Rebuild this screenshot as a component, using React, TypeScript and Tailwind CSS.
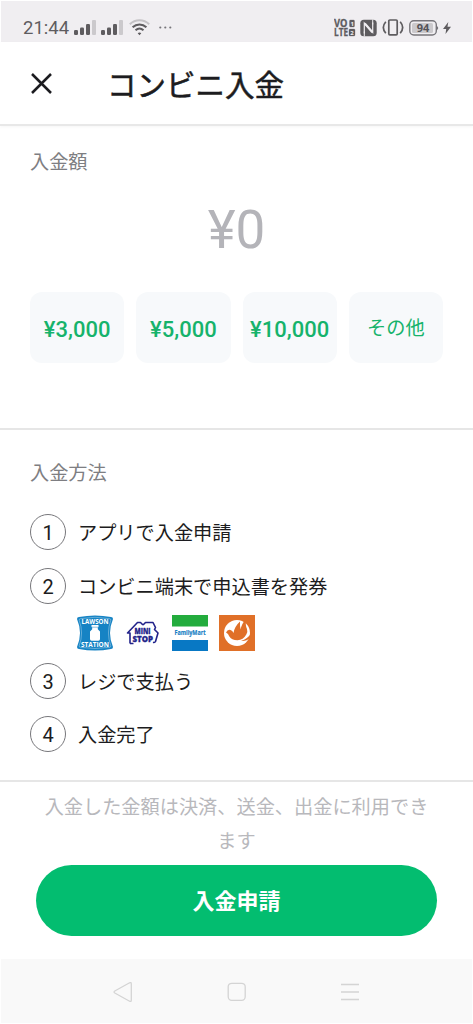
import { ReactNode, useState } from 'react'

const amounts = ['¥3,000', '¥5,000', '¥10,000', 'その他']

const SignalIcon = () => (
  <svg width="22" height="16" viewBox="0 0 22 16" fill="#5e5c5f">
    <rect x="0" y="10" width="4" height="5" rx="1.2" />
    <rect x="6" y="7.6" width="4" height="7.4" rx="1.2" />
    <rect x="12" y="4" width="4" height="11" rx="1.2" />
    <rect x="18" y="0" width="4" height="15" rx="1" fill="#cbc9cc" />
  </svg>
)

const WifiIcon = () => (
  <svg width="21" height="17" viewBox="0 0 21 17" fill="none" strokeWidth="2">
    <path d="M.8 5.2C6.3-.1 14.7-.1 20.2 5.2" stroke="#c4c2c5" />
    <path d="M3.6 8.3c4-3.9 9.800-3.9 13.8 0" stroke="#5e5c5f" />
    <path d="M6.500 11.300c2.400-2.200 5.600-2.200 8 0" stroke="#5e5c5f" />
    <path d="m8.700 14.200 1.800 2 1.800-2c-1.100-.9-2.500-.9-3.600 0Z" fill="#5e5c5f" />
  </svg>
)

const VolteIcon = () => (
  <svg width="22" height="20" viewBox="0 0 22 20" fill="#5e5c5f" stroke="#5e5c5f" strokeWidth=".3">
    <g fontFamily="Open Sans, sans-serif" fontSize="10" fontWeight="700">
      <text x="0" y="9" textLength="13.500" lengthAdjust="spacingAndGlyphs">VO</text>
      <text x="0" y="18" textLength="14" lengthAdjust="spacingAndGlyphs">LTE</text>
    </g>
    <rect x="15.500" y="2" width="5" height="7" rx="1" />
    <rect x="15" y="11" width="6" height="7" rx="1" />
    <g fill="#f0eef1" stroke="none" fontFamily="Open Sans, sans-serif" fontSize="6" fontWeight="700">
      <text x="16.400" y="7.700">1</text>
      <text x="16.300" y="16.800">2</text>
    </g>
  </svg>
)

const NfcIcon = () => (
  <svg width="17" height="18" viewBox="0 0 17 18">
    <rect x=".3" y=".8" width="16.400" height="16.400" rx="3.500" fill="#5e5c5f" />
    <path d="M4.300 14.500V4l8.400 9.500V3.500" fill="none" stroke="#f0eef1" strokeWidth="1.200" />
    <path d="m4.800 4.600 7.600 8.600" stroke="#f0eef1" strokeWidth="2.200" />
    <path d="M4.300 17.500v-5M12.700 5.500V.5" stroke="#f0eef1" strokeWidth="1" />
  </svg>
)

const VibrateIcon = () => (
  <svg width="22" height="17" viewBox="0 0 22 17" fill="none" stroke="#5e5c5f" strokeWidth="1.700">
    <rect x="6.800" y="1" width="8.400" height="14.800" rx="1" />
    <path d="M3.800 2.800c-3.200 3.700-3.200 7.700 0 11.400M18.200 2.800c3.200 3.700 3.200 7.700 0 11.400" />
  </svg>
)

const BatteryIcon = () => (
  <svg width="30" height="16" viewBox="0 0 30 16">
    <rect x=".8" y=".8" width="26.500" height="14.200" rx="4" fill="none" stroke="#77757a" strokeWidth="1.400" />
    <rect x="3" y="3" width="21" height="10" rx="1.500" fill="#cbc9cc" />
    <path d="M28 6.200c1.500.3 1.500 3.300 0 3.600Z" fill="#77757a" />
    <text x="14" y="11.900" textAnchor="middle" fontFamily="Open Sans, sans-serif" fontSize="11" fontWeight="700" fill="#555357">94</text>
  </svg>
)

const StatusBar = () => (
  <div className="mx-px mt-px flex h-[41px] shrink-0 items-center bg-[#f0eef1] pt-3 pl-[22px] text-[#5e5c5f]">
    <span className="w-[51px] pt-px font-[Roboto] text-[18.500px] leading-none">21:44</span>
    <SignalIcon />
    <span className="ml-[5px] flex"><SignalIcon /></span>
    <span className="ml-[6px] flex"><WifiIcon /></span>
    <svg className="ml-[9px]" width="14" height="4" viewBox="0 0 14 4" fill="#77757a">
      <circle cx="1.300" cy="1.500" r="1.100" />
      <circle cx="6.300" cy="1.500" r="1.100" />
      <circle cx="11.300" cy="1.500" r="1.100" />
    </svg>
    <div className="mr-[21px] ml-auto flex items-center">
      <VolteIcon />
      <span className="ml-[4px]"><NfcIcon /></span>
      <span className="ml-[5px]"><VibrateIcon /></span>
      <span className="ml-[5px]"><BatteryIcon /></span>
      <svg className="ml-1" width="8" height="12" viewBox="0 0 8 12" fill="#5e5c5f">
        <path d="M5.300 0 0 7h3.200L2.500 12 8 4.800H4.500Z" />
      </svg>
    </div>
  </div>
)

const LawsonLogo = () => (
  <svg width="36" height="36" viewBox="0 0 36 36">
    <path d="M2 2Q18-1 34 2q2 0 2 2-6 14 0 28 0 2-2 2-16 3-32 0-2 0-2-2 6-14 0-28 0-2 2-2Z" fill="#1683c4" />
    <path d="M3.500 3.700Q18 .8 32.500 3.700q1.500 0 1.300 1.400-4.700 13 0 25.700.2 1.400-1.300 1.500-14.500 2.500-29 0-1.500-.1-1.300-1.500 4.700-12.700 0-25.700-.2-1.400 1.300-1.400Z" fill="none" stroke="#d9edf8" strokeWidth=".4" />
    <path d="M14.500 10h7v2l-.7.600v1.600l2.200 2.400v7.500q0 1.600-1.600 1.600h-6.800q-1.600 0-1.600-1.600v-7.500l2.200-2.400v-1.600l-.7-.6Z" fill="#fff" />
    <path d="M14.500 12.200h7" stroke="#1683c4" strokeWidth=".5" />
    <g fill="#fff" fontFamily="Open Sans, sans-serif" fontSize="7" fontWeight="700" textAnchor="middle">
      <text x="18" y="8.500" textLength="27" lengthAdjust="spacingAndGlyphs">LAWSON</text>
      <text x="18" y="32.200" textLength="28" lengthAdjust="spacingAndGlyphs">STATION</text>
    </g>
  </svg>
)

const MiniStopLogo = () => (
  <svg width="34" height="24" viewBox="0 0 34 24" fill="none" stroke="#22238a" strokeWidth="1.600" strokeLinejoin="round">
    <path d="M4 22.500V12H1.500L11.500 1.500h3L17 4M17 4l2.500-2.500h7.500l2.500 5-1 2 3.500 3.500-2.500 8.500q-.6 1.300-2.500.8M4 22.500h3.500" />
    <g fill="#22238a" stroke="#22238a" strokeWidth=".3" fontFamily="Open Sans, sans-serif" fontSize="9" fontWeight="800">
      <text x="8.500" y="12.600" textLength="16" lengthAdjust="spacingAndGlyphs">MINI</text>
      <text x="6.500" y="21" textLength="20.500" lengthAdjust="spacingAndGlyphs">STOP</text>
    </g>
  </svg>
)

const FamilyMartLogo = () => (
  <svg width="36" height="36" viewBox="0 0 36 36">
    <path d="M0 0h36v36H0Z" fill="#fff" />
    <path d="M0 0h36v11.500H0Z" fill="#23ac3d" />
    <path d="M0 25h36v11H0Z" fill="#0878c4" />
    <text x="18" y="20.200" textAnchor="middle" textLength="31" lengthAdjust="spacingAndGlyphs" fontFamily="Open Sans, sans-serif" fontSize="6.500" fontWeight="700" fill="#1680c4" stroke="#1680c4" strokeWidth=".15">FamilyMart</text>
  </svg>
)

const SeicomartLogo = () => (
  <svg width="36" height="36" viewBox="0 0 36 36">
    <path d="M0 0h36v36H0Z" fill="#e07028" />
    <circle cx="18" cy="18" r="13" fill="#fff" />
    <path d="M7 17.500q1.500-3.300 4.500-2.500 2 .6 3 3 1-6.500 6.500-11.500-.3 4.500.7 8 .8-6 5.300-10-.8 6 1 9.500 1 3-.7 5.500-3 5.500-8.800 5.700-6 0-8.300-4-.8-2.500-3.200-3.700Z" fill="#e07028" />
    <path d="M32 18.500q-3.500 5.500-10 7.500 5.500.5 9-3Z" fill="#e07028" />
  </svg>
)

interface StepProps {
  num: number
  text: string
  children?: ReactNode
}

const Step = ({ num, text, children }: StepProps) => (
  <li>
    <div className="flex h-9 items-center">
      <span className="flex size-9 items-center justify-center rounded-full border-[1.500px] border-[#77777b] pt-0.5 font-[Roboto] text-[20px] leading-none">
        {num}
      </span>
      <span className="ml-3 pt-[3px] text-[19.200px] leading-none">{text}</span>
    </div>
    {children}
  </li>
)

const NavBar = () => (
  <nav className="mx-px mb-px flex h-16 shrink-0 items-center bg-[#f9f9f9] pt-0.5 pl-[111px]">
    <svg width="250" height="22" viewBox="0 0 250 22" fill="none" stroke="#d4d4d4" strokeWidth="1.300">
      <path d="M17.600 1.800 2.800 10q-1.500 1 0 2l14.800 8.200q1.700.8 1.700-1V2.800q0-1.800-1.700-1Z" />
      <rect x="116.200" y="2.300" width="17" height="17" rx="3.500" />
      <path d="M229 3.500h18M229 11h18M229 18.500h18" />
    </svg>
  </nav>
)

export default function App() {
  const [amount, setAmount] = useState<string>('¥0')

  return (
    <div className="flex h-screen w-full flex-col overflow-hidden bg-white font-['Roboto','Noto_Sans_CJK_JP',sans-serif] text-[#1c1c20]">
      <StatusBar />
      <header className="flex h-[84px] shrink-0 items-center border-b-2 border-[#e8e8e8] pl-[31px] shadow-[0_1px_3px_rgba(0,0,0,0.04)]">
        <svg width="21" height="21" viewBox="0 0 21 21" stroke="#1c1c20" strokeWidth="2.500">
          <path d="m1 1 19 19M20 1 1 20" />
        </svg>
        <h1 className="ml-[55px] pt-[7px] text-[29.500px] leading-none font-normal [-webkit-text-stroke:0.5px]">コンビニ入金</h1>
      </header>

      <section className="flex h-[304px] shrink-0 flex-col border-b-2 border-[#e6e6e6] px-[30px] pt-[27px]">
        <h2 className="text-[19.200px] leading-none text-[#7e7e82]">入金額</h2>
        <p className="mt-8 text-center text-[53px] leading-none text-[#b4b4b9]">{amount}</p>
        <div className="mt-[35px] grid grid-cols-4 gap-3">
          {amounts.map((item) => (
            <button
              key={item}
              onClick={() => item !== 'その他' && setAmount(item)}
              className={`h-[71px] rounded-xl bg-[#f7f9fb] whitespace-nowrap text-[#16b36b] ${
                item === 'その他' ? 'pt-1 text-[19.200px]' : 'pt-[3px] text-[22px] font-medium'
              }`}
            >
              {item}
            </button>
          ))}
        </div>
      </section>

      <section className="h-[352px] shrink-0 border-b-2 border-[#e6e6e6] px-[30px] pt-[34px]">
        <h2 className="text-[19.200px] leading-none text-[#7e7e82]">入金方法</h2>
        <ol className="mt-[31px] flex flex-col gap-[17.500px]">
          <Step num={1} text="アプリで入金申請" />
          <Step num={2} text="コンビニ端末で申込書を発券">
            <div className="mt-[11px] -mb-1.5 ml-[47px] flex h-[36.500px] items-start">
              <LawsonLogo />
              <span className="mt-[6px] ml-[13px]"><MiniStopLogo /></span>
              <span className="ml-[12px]"><FamilyMartLogo /></span>
              <span className="ml-[11px]"><SeicomartLogo /></span>
            </div>
          </Step>
          <Step num={3} text="レジで支払う" />
          <Step num={4} text="入金完了" />
        </ol>
      </section>

      <footer className="flex grow flex-col px-9 pt-[9px]">
        <p className="text-center text-[19.200px] leading-[34px] text-[#b8b8bc]">
          入金した金額は決済、送金、出金に利用できます
        </p>
        <button className="mt-[6px] h-[71px] rounded-full bg-[#03bd70] pt-0.5 text-[22px] font-bold text-white">
          入金申請
        </button>
      </footer>
      <NavBar />
    </div>
  )
}
